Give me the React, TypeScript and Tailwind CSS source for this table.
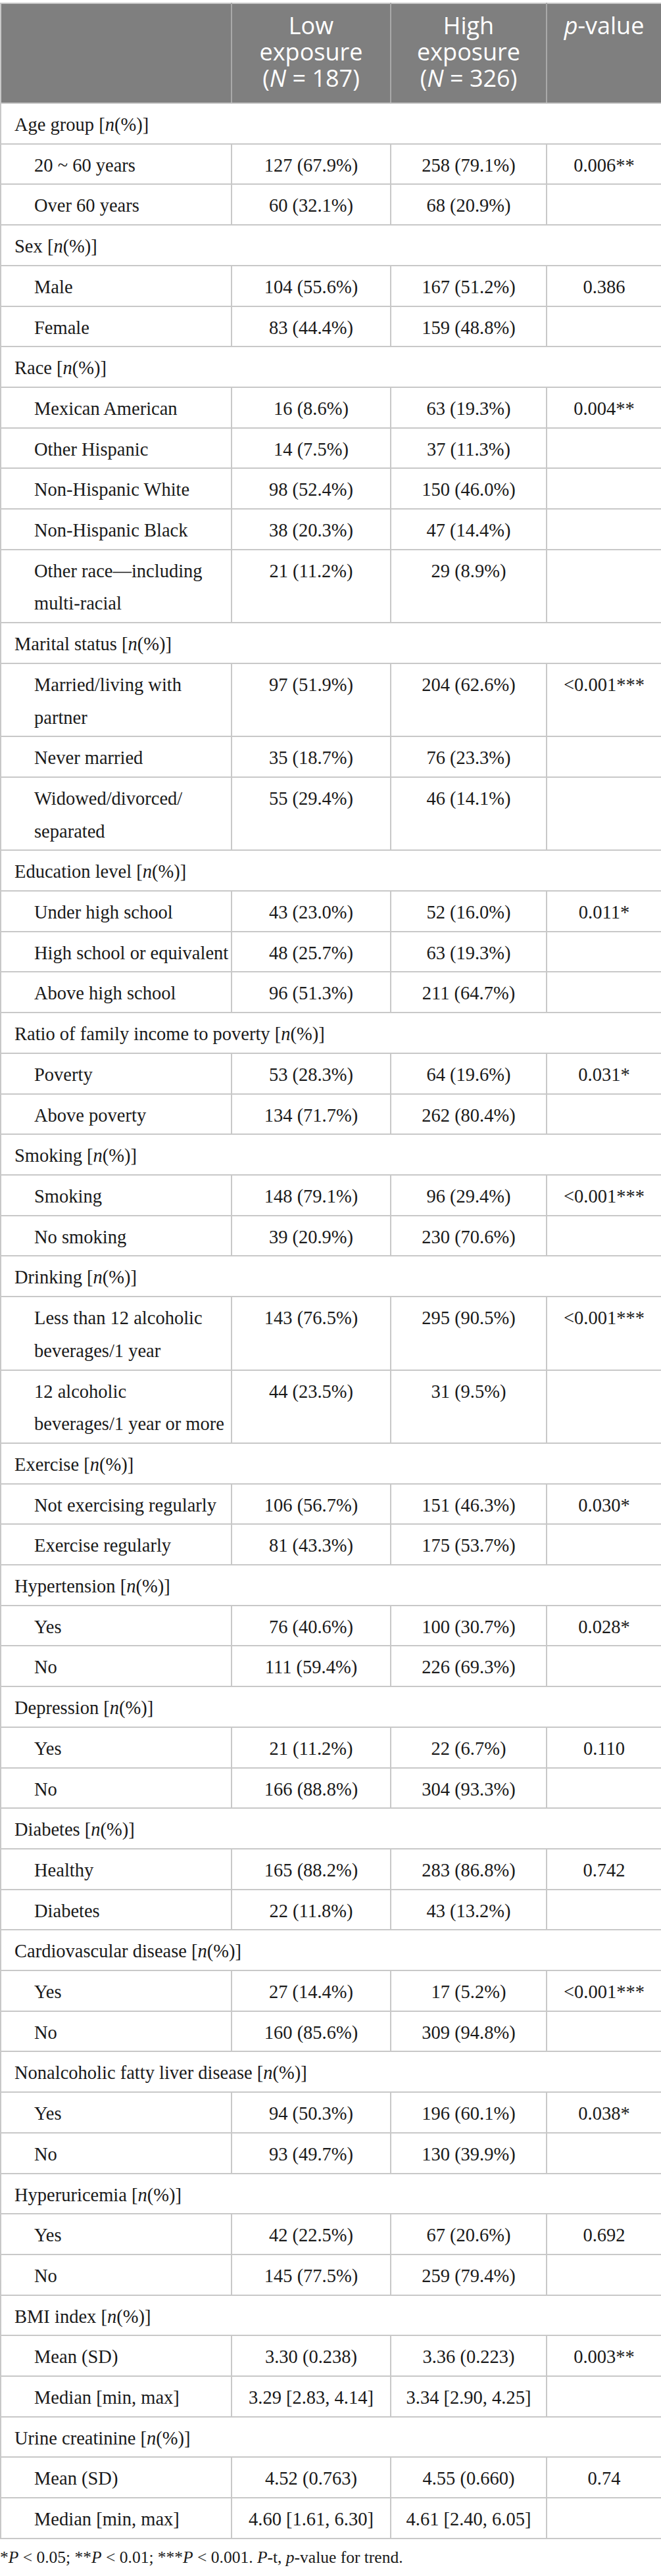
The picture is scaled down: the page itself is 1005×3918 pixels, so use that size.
import React from 'react'

type Row =
  | { kind: 'section'; label: string }
  | { kind: 'data'; label: string; low: string; high: string; p?: string }

const rows: Row[] = [
  { kind: 'section', label: 'Age group' },
  { kind: 'data', label: '20 ~ 60 years', low: '127 (67.9%)', high: '258 (79.1%)', p: '0.006**' },
  { kind: 'data', label: 'Over 60 years', low: '60 (32.1%)', high: '68 (20.9%)' },
  { kind: 'section', label: 'Sex' },
  { kind: 'data', label: 'Male', low: '104 (55.6%)', high: '167 (51.2%)', p: '0.386' },
  { kind: 'data', label: 'Female', low: '83 (44.4%)', high: '159 (48.8%)' },
  { kind: 'section', label: 'Race' },
  { kind: 'data', label: 'Mexican American', low: '16 (8.6%)', high: '63 (19.3%)', p: '0.004**' },
  { kind: 'data', label: 'Other Hispanic', low: '14 (7.5%)', high: '37 (11.3%)' },
  { kind: 'data', label: 'Non-Hispanic White', low: '98 (52.4%)', high: '150 (46.0%)' },
  { kind: 'data', label: 'Non-Hispanic Black', low: '38 (20.3%)', high: '47 (14.4%)' },
  { kind: 'data', label: 'Other race—including\nmulti-racial', low: '21 (11.2%)', high: '29 (8.9%)' },
  { kind: 'section', label: 'Marital status' },
  { kind: 'data', label: 'Married/living with\npartner', low: '97 (51.9%)', high: '204 (62.6%)', p: '<0.001***' },
  { kind: 'data', label: 'Never married', low: '35 (18.7%)', high: '76 (23.3%)' },
  { kind: 'data', label: 'Widowed/divorced/\nseparated', low: '55 (29.4%)', high: '46 (14.1%)' },
  { kind: 'section', label: 'Education level' },
  { kind: 'data', label: 'Under high school', low: '43 (23.0%)', high: '52 (16.0%)', p: '0.011*' },
  { kind: 'data', label: 'High school or equivalent', low: '48 (25.7%)', high: '63 (19.3%)' },
  { kind: 'data', label: 'Above high school', low: '96 (51.3%)', high: '211 (64.7%)' },
  { kind: 'section', label: 'Ratio of family income to poverty' },
  { kind: 'data', label: 'Poverty', low: '53 (28.3%)', high: '64 (19.6%)', p: '0.031*' },
  { kind: 'data', label: 'Above poverty', low: '134 (71.7%)', high: '262 (80.4%)' },
  { kind: 'section', label: 'Smoking' },
  { kind: 'data', label: 'Smoking', low: '148 (79.1%)', high: '96 (29.4%)', p: '<0.001***' },
  { kind: 'data', label: 'No smoking', low: '39 (20.9%)', high: '230 (70.6%)' },
  { kind: 'section', label: 'Drinking' },
  { kind: 'data', label: 'Less than 12 alcoholic\nbeverages/1 year', low: '143 (76.5%)', high: '295 (90.5%)', p: '<0.001***' },
  { kind: 'data', label: '12 alcoholic\nbeverages/1 year or more', low: '44 (23.5%)', high: '31 (9.5%)' },
  { kind: 'section', label: 'Exercise' },
  { kind: 'data', label: 'Not exercising regularly', low: '106 (56.7%)', high: '151 (46.3%)', p: '0.030*' },
  { kind: 'data', label: 'Exercise regularly', low: '81 (43.3%)', high: '175 (53.7%)' },
  { kind: 'section', label: 'Hypertension' },
  { kind: 'data', label: 'Yes', low: '76 (40.6%)', high: '100 (30.7%)', p: '0.028*' },
  { kind: 'data', label: 'No', low: '111 (59.4%)', high: '226 (69.3%)' },
  { kind: 'section', label: 'Depression' },
  { kind: 'data', label: 'Yes', low: '21 (11.2%)', high: '22 (6.7%)', p: '0.110' },
  { kind: 'data', label: 'No', low: '166 (88.8%)', high: '304 (93.3%)' },
  { kind: 'section', label: 'Diabetes' },
  { kind: 'data', label: 'Healthy', low: '165 (88.2%)', high: '283 (86.8%)', p: '0.742' },
  { kind: 'data', label: 'Diabetes', low: '22 (11.8%)', high: '43 (13.2%)' },
  { kind: 'section', label: 'Cardiovascular disease' },
  { kind: 'data', label: 'Yes', low: '27 (14.4%)', high: '17 (5.2%)', p: '<0.001***' },
  { kind: 'data', label: 'No', low: '160 (85.6%)', high: '309 (94.8%)' },
  { kind: 'section', label: 'Nonalcoholic fatty liver disease' },
  { kind: 'data', label: 'Yes', low: '94 (50.3%)', high: '196 (60.1%)', p: '0.038*' },
  { kind: 'data', label: 'No', low: '93 (49.7%)', high: '130 (39.9%)' },
  { kind: 'section', label: 'Hyperuricemia' },
  { kind: 'data', label: 'Yes', low: '42 (22.5%)', high: '67 (20.6%)', p: '0.692' },
  { kind: 'data', label: 'No', low: '145 (77.5%)', high: '259 (79.4%)' },
  { kind: 'section', label: 'BMI index' },
  { kind: 'data', label: 'Mean (SD)', low: '3.30 (0.238)', high: '3.36 (0.223)', p: '0.003**' },
  { kind: 'data', label: 'Median [min, max]', low: '3.29 [2.83, 4.14]', high: '3.34 [2.90, 4.25]' },
  { kind: 'section', label: 'Urine creatinine' },
  { kind: 'data', label: 'Mean (SD)', low: '4.52 (0.763)', high: '4.55 (0.660)', p: '0.74' },
  { kind: 'data', label: 'Median [min, max]', low: '4.60 [1.61, 6.30]', high: '4.61 [2.40, 6.05]' },
]

const cell = 'border-2 border-[#c8c8c8] align-top pt-[7px] pb-[3px]'
const head = 'border-2 border-[#a9a9a9] border-t-[#c8c8c8] border-b-[#c8c8c8] align-top pt-[13px] pb-[17px] font-normal'

export default function App() {
  return (
    <div className="bg-white pt-[4px] text-[#1a1a1a] [font-family:'Liberation_Serif',serif]">
      <table className="w-[1005px] table-fixed border-collapse text-[28.5px] leading-[49.7px]">
        <colgroup>
          <col className="w-[351px]" />
          <col className="w-[242px]" />
          <col className="w-[237px]" />
          <col className="w-[175px]" />
        </colgroup>
        <thead>
          <tr className="bg-[#7f7f7f] text-white [font-family:'Open_Sans',sans-serif] text-[36px] leading-[40px]">
            <th className={`${head} border-l-[#c8c8c8]`} />
            <th className={head}>
              Low
              <br />
              exposure
              <br />
              (<i>N</i> = 187)
            </th>
            <th className={head}>
              High
              <br />
              exposure
              <br />
              (<i>N</i> = 326)
            </th>
            <th className={`${head} border-r-[#c8c8c8]`}>
              <i>p</i>-value
            </th>
          </tr>
        </thead>
        <tbody>
          {rows.map((r, i) =>
            r.kind === 'section' ? (
              <tr key={i}>
                <td colSpan={4} className={`${cell} pl-[20px]`}>
                  {r.label} [<i>n</i>(%)]
                </td>
              </tr>
            ) : (
              <tr key={i}>
                <td className={`${cell} pl-[50px] pr-0 whitespace-pre-line`}>{r.label}</td>
                <td className={`${cell} text-center`}>{r.low}</td>
                <td className={`${cell} text-center`}>{r.high}</td>
                <td className={`${cell} text-center`}>{r.p ?? ''}</td>
              </tr>
            ),
          )}
        </tbody>
      </table>
      <p className="mt-[10px] text-[25.5px] leading-[36px]">
        *<i>P</i> &lt; 0.05; **<i>P</i> &lt; 0.01; ***<i>P</i> &lt; 0.001. <i>P</i>-t, <i>p</i>-value for trend.
      </p>
    </div>
  )
}
